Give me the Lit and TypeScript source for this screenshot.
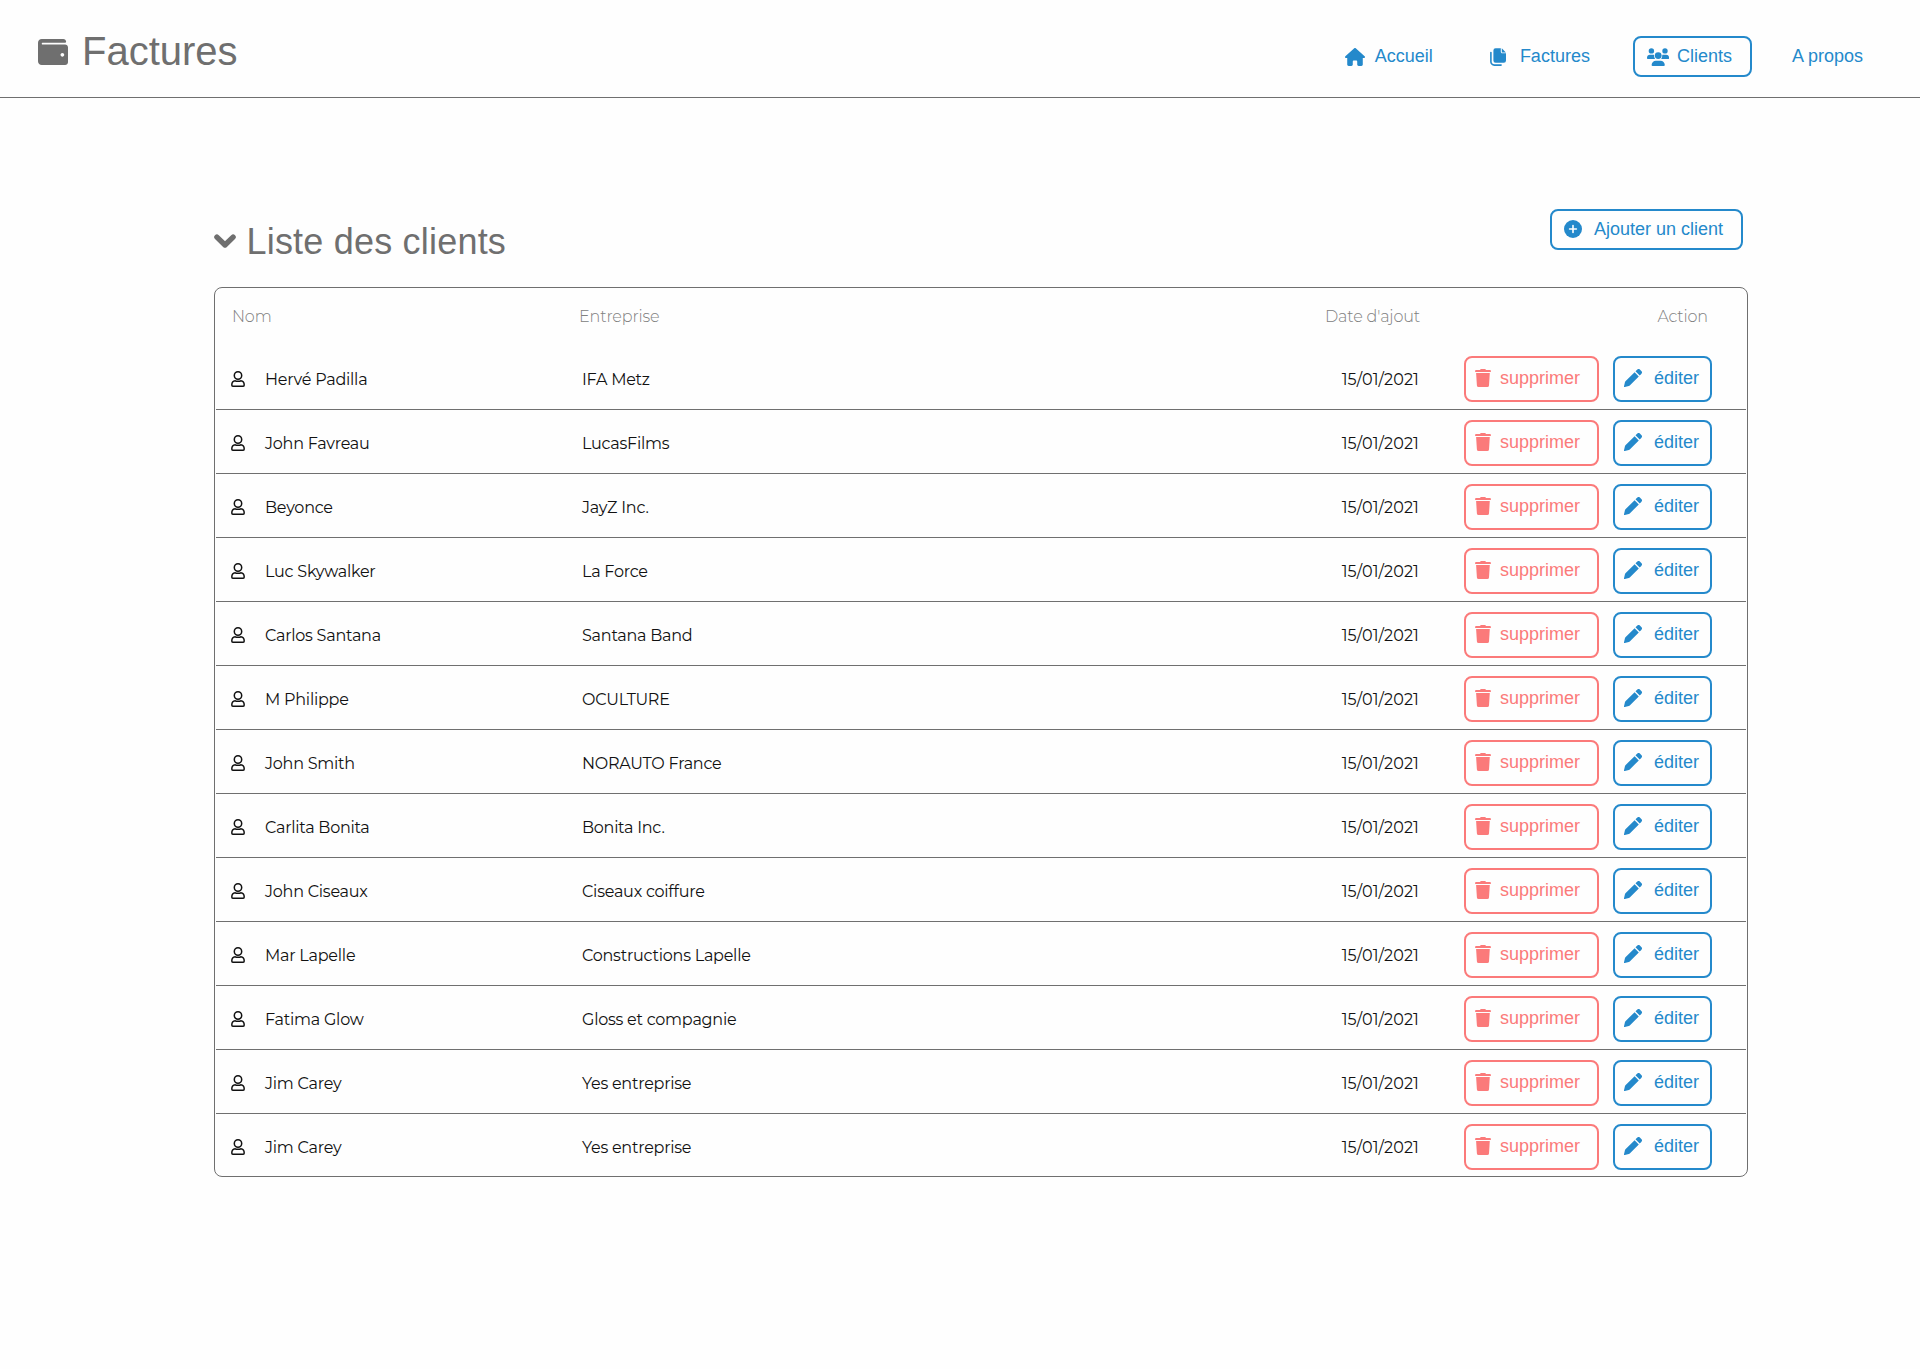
import { LitElement, html, svg, css } from "lit";
import { customElement, property } from "lit/decorators.js";

const icons = {
  wallet: { w: 30, h: 26, box: "0 32 512 448", body: svg`<path d="M461.2 128H80c-8.84 0-16-7.16-16-16s7.16-16 16-16h384c8.84 0 16-7.16 16-16 0-26.51-21.49-48-48-48H64C28.65 32 0 60.65 0 96v320c0 35.35 28.65 64 64 64h397.2c28.02 0 50.8-21.53 50.8-48V176c0-26.47-22.78-48-50.8-48zM416 336c-17.67 0-32-14.33-32-32s14.33-32 32-32 32 14.33 32 32-14.33 32-32 32z"/>` },
  home: { w: 20, h: 18, box: "0 0 576 512", body: svg`<path d="M575.8 255.5c0 18-15 32.1-32 32.1h-32l.7 160.2c0 2.7-.2 5.4-.5 8.1V472c0 22.1-17.9 40-40 40H392c-22.1 0-40-17.9-40-40V384c0-17.7-14.3-32-32-32H256c-17.7 0-32 14.3-32 32v88c0 22.1-17.9 40-40 40H104c-22.1 0-40-17.9-40-40V287.6H32c-18 0-32-14-32-32.1c0-9 3-17 10-24L266.4 8c7-7 15-8 22-8s15 2 21 7L564.8 231.5c8 7 12 15 11 24z"/>` },
  files: { w: 16, h: 18, box: "0 0 16 18", body: svg`<path d="M5.6.2h5.2v3.6c0 .9.6 1.5 1.5 1.5H16v7.2a2.2 2.2 0 0 1-2.2 2.2H5.6a2.2 2.2 0 0 1-2.2-2.2V2.4A2.2 2.2 0 0 1 5.600.2zM11.800.3 15.900 4.400h-3.600a.5.5 0 0 1-.5-.5z"/><path d="M.9 4.600v8.900a3.400 3.400 0 0 0 3.400 3.600h6.800" fill="none" stroke="currentColor" stroke-width="1.600" stroke-linecap="round"/>` },
  users: { w: 22, h: 18, box: "0 0 22 18", body: svg`<circle cx="4.4" cy="2.9" r="2.7"/><circle cx="18" cy="2.9" r="2.7"/><circle cx="11.2" cy="7.6" r="3.4"/><path d="M3 6.800h3.100c.3 0 .7.1 1 .2-.2 1.500.1 2.800 1 3.900H.7a.7.7 0 0 1-.7-.7A3.200 3.300 0 0 1 3 6.800zM19.300 6.800h-3.100c-.3 0-.7.1-1 .2.2 1.500-.1 2.800-1 3.900h7.300a.7.7 0 0 0 .7-.7 3.200 3.300 0 0 0-2.900-3.400zM9 12.700h4.500a4.300 4.300 0 0 1 4.300 4.300 1 1 0 0 1-1 1H5.600a1 1 0 0 1-1-1A4.300 4.300 0 0 1 9 12.700z"/>` },
  chevron: { w: 22, h: 15, box: "0 0 22 15", body: svg`<path d="M2.900 3.100 11 11 19.100 3.100" fill="none" stroke="currentColor" stroke-width="5.400" stroke-linecap="round" stroke-linejoin="round"/>` },
  plus: { w: 18, h: 18, box: "0 0 18 18", body: svg`<circle cx="9" cy="9" r="9"/><path d="M9 5.600v6.800M5.600 9h6.800" stroke="#fff" stroke-width="1.600" stroke-linecap="round"/>` },
  trash: { w: 16, h: 18, box: "0 0 16 18", body: svg`<path d="M1 1.100h3.900l.4-.7A.8.8 0 0 1 6 0h4a.8.8 0 0 1 .7.4l.4.700H15a1 1 0 0 1 .9 1v.4a.6.6 0 0 1-.6.600H.7a.6.6 0 0 1-.6-.6v-.4a1 1 0 0 1 .9-1zM1.100 4.100h13.700l-.8 12.300A1.700 1.700 0 0 1 12.300 18H3.600a1.700 1.700 0 0 1-1.700-1.600z"/>` },
  pencil: { w: 18, h: 18, box: "0 0 18 18", body: svg`<path d="M10.600 3.200 14.800 7.400 6 16.200a2.500 2.500 0 0 1-1.200.7L.8 18a.6.6 0 0 1-.8-.8l1-4.100a2.500 2.500 0 0 1 .7-1.200zM11.500 2.300 13.100.7a2.100 2.100 0 0 1 3 0l1.200 1.200a2.100 2.100 0 0 1 0 3l-1.600 1.600z"/>` },
  person: { w: 14, h: 16, box: "0 0 14 16", body: svg`<g fill="none" stroke="currentColor" stroke-width="1.500"><circle cx="7" cy="4.500" r="3.700"/><path d="M.8 14.100c0-2.600 1.300-4.100 3.400-4.300 1.100.6 4.500.6 5.600 0 2.100.2 3.400 1.700 3.400 4.300 0 .7-.4 1.100-1 1.100H1.800c-.6 0-1-.4-1-1.100z"/></g>` },
};
type IconName = keyof typeof icons;

@customElement("app-icon")
class AppIcon extends LitElement {
  @property() name: IconName = "home";
  static styles = css`
    :host { display: block; flex: none; }
    svg { display: block; fill: currentColor; }
  `;
  render() {
    const i = icons[this.name];
    return html`<svg width=${i.w} height=${i.h} viewBox=${i.box} preserveAspectRatio="none" aria-hidden="true">${i.body}</svg>`;
  }
}

interface Client { name: string; company: string; date: string; }
const clients: Client[] = [
  ["Hervé Padilla", "IFA Metz"],
  ["John Favreau", "LucasFilms"],
  ["Beyonce", "JayZ Inc."],
  ["Luc Skywalker", "La Force"],
  ["Carlos Santana", "Santana Band"],
  ["M Philippe", "OCULTURE"],
  ["John Smith", "NORAUTO France"],
  ["Carlita Bonita", "Bonita Inc."],
  ["John Ciseaux", "Ciseaux coiffure"],
  ["Mar Lapelle", "Constructions Lapelle"],
  ["Fatima Glow", "Gloss et compagnie"],
  ["Jim Carey", "Yes entreprise"],
  ["Jim Carey", "Yes entreprise"],
].map(([name, company]) => ({ name, company, date: "15/01/2021" }));

@customElement("client-table")
class ClientTable extends LitElement {
  static styles = css`
    :host { display: block; font: 400 16px/20px "Montserrat", "Inter", sans-serif; color: #111; }
    .table { box-sizing: border-box; height: 890px; border: 1px solid #6f6f6f; border-radius: 8px; padding: 0 1px; }
    .head, .row { display: grid; grid-template-columns: 351px 1fr auto 327px; align-items: center; box-sizing: border-box; }
    .head { height: 58px; color: #808080; font-weight: 300; letter-spacing: -0.15px; padding-left: 16px; grid-template-columns: 347px 1fr auto 326px; }
    .row { height: 64px; border-bottom: 1px solid #6f6f6f; padding-left: 15px; letter-spacing: -0.24px; }
    .row:last-child { border-bottom: 0; height: 63px; }
    .name { display: flex; align-items: center; gap: 20px; }
    .name span, .company, .date { padding-top: 4px; }
    .name app-icon { margin-top: 3px; }
    .date { letter-spacing: 0.12px; }
    .headaction { text-align: right; padding-right: 38px; }
    .actions { display: flex; gap: 14px; padding: 2px 0 0 45px; }
    button { box-sizing: border-box; height: 46px; display: flex; align-items: center; background: none; border: 2px solid; border-radius: 8px; font: 18px "Liberation Sans", Arial, sans-serif; padding: 0; margin: 0; }
    button app-icon { margin-top: -1px; }
    .delete { width: 135px; color: #fb7a7a; padding-left: 9px; gap: 9px; }
    .edit { width: 99px; color: #2489cb; padding-left: 9px; gap: 12px; }
  `;
  render() {
    return html`<div class="table">
      <div class="head"><span>Nom</span><span>Entreprise</span><span>Date d'ajout</span><span class="headaction">Action</span></div>
      ${clients.map((c) => html`<div class="row">
        <div class="name"><app-icon name="person"></app-icon><span>${c.name}</span></div>
        <span class="company">${c.company}</span>
        <span class="date">${c.date}</span>
        <div class="actions">
          <button class="delete"><app-icon name="trash"></app-icon>supprimer</button>
          <button class="edit"><app-icon name="pencil"></app-icon>éditer</button>
        </div>
      </div>`)}
    </div>`;
  }
}

@customElement("app-root")
class AppRoot extends LitElement {
  static styles = css`
    :host { display: block; min-height: 1369px; background: #fefefe; font-family: "Liberation Sans", Arial, sans-serif; color: #6f6f6f; }
    header { box-sizing: border-box; height: 98px; border-bottom: 1px solid #6f6f6f; display: flex; justify-content: space-between; align-items: flex-start; padding: 0 36px 0 38px; }
    .brand { display: flex; align-items: center; gap: 14px; font-size: 40px; line-height: 46px; padding-top: 28px; }
    .brand app-icon { margin-top: 2px; }
    nav { display: flex; gap: 22px; padding-top: 36px; }
    .btn { box-sizing: border-box; height: 41px; display: flex; align-items: center; border: 2px solid transparent; border-radius: 8px; color: #2489cb; font-size: 18px; padding: 0 19px 0 12px; white-space: nowrap; }
    .active, .add { border-color: #2489cb; }
    .home { gap: 10px; }
    .files { gap: 14px; }
    .active { gap: 8px; padding-right: 18px; }
    .about { padding-left: 16px; }
    main { width: 1534px; padding: 111px 0 0 214px; }
    .bar { display: flex; justify-content: space-between; align-items: flex-start; height: 78px; padding-right: 5px; }
    h1 { margin: 0; font-weight: 400; font-size: 36px; line-height: 42px; display: flex; align-items: center; gap: 10.5px; padding-top: 12px; letter-spacing: 0.2px; }
    h1 app-icon { margin-top: -2px; }
    .add { width: 193px; gap: 12px; padding: 0 0 0 12px; }
    .add app-icon { margin-top: -1px; }
  `;
  render() {
    return html`
      <header>
        <div class="brand"><app-icon name="wallet"></app-icon>Factures</div>
        <nav>
          <a class="btn home"><app-icon name="home"></app-icon>Accueil</a>
          <a class="btn files"><app-icon name="files"></app-icon>Factures</a>
          <a class="btn active"><app-icon name="users"></app-icon>Clients</a>
          <a class="btn about">A propos</a>
        </nav>
      </header>
      <main>
        <div class="bar">
          <h1><app-icon name="chevron"></app-icon>Liste des clients</h1>
          <a class="btn add"><app-icon name="plus"></app-icon>Ajouter un client</a>
        </div>
        <client-table></client-table>
      </main>`;
  }
}
